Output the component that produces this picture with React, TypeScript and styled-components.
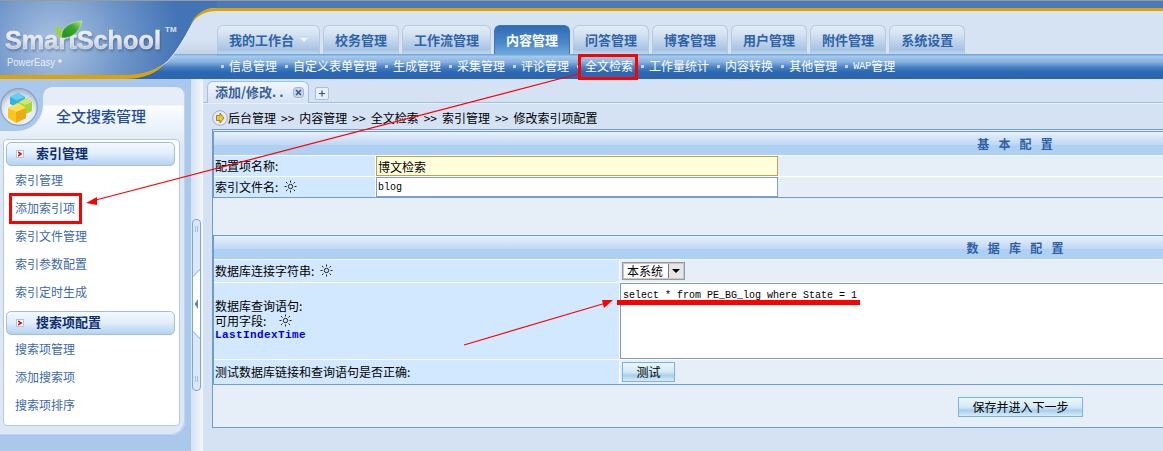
import React from "react";
import styled, { createGlobalStyle } from "styled-components";

const CJK = `"Noto Sans CJK SC", "Liberation Sans", sans-serif`;
const MONO = `"Liberation Mono", "Noto Sans CJK SC", monospace`;

const Global = createGlobalStyle`
  html, body { margin: 0; padding: 0; background: #d4e2f4; overflow: hidden; }
  body { font: 12px/1.2 ${CJK}; color: #000; }
  * { box-sizing: border-box; }
`;

const Page = styled.div`
  position: relative;
  width: 1163px;
  height: 451px;
  overflow: hidden;
  display: flex;
  flex-direction: column;
`;

const Header = styled.header`
  display: flex;
  height: 79px;
  flex: none;
`;

const LogoArt = styled.svg`
  display: block;
  flex: none;
  width: 217px;
  height: 79px;
`;

const NavArea = styled.nav`
  flex: 1;
  display: flex;
  flex-direction: column;
  background: linear-gradient(#9a9a9a 0 1px, #4a7bb8 1px 8px, #dfa200 8px 11px, #d5e3f3 11px);
`;

const TabRow = styled.div`
  height: 54px;
  padding-top: 25px;
  display: flex;
  gap: 3px;
`;

const NavTab = styled.div<{ $active?: boolean }>`
  height: 29px;
  padding: 0 11px;
  display: flex;
  align-items: center;
  border: 1px solid ${(p) => (p.$active ? "#3f74b4" : "#b9c9dc")};
  border-bottom: 0;
  border-radius: 6px 6px 0 0;
  background: ${(p) =>
    p.$active
      ? "linear-gradient(#2f6bb5, #4a88c8 60%, #6ea8dd)"
      : "linear-gradient(#e2ecf7, #d4e2f2 30%, #a7c3e3 85%, #c3d8ee)"};
  color: ${(p) => (p.$active ? "#fff" : "#2d63a8")};
  font-size: 13px;
  font-weight: 700;
  white-space: nowrap;
`;

const Caret = styled.span`
  width: 0;
  height: 0;
  margin-left: 6px;
  border: 4px solid transparent;
  border-top-color: #f2f6fb;
  border-bottom: 0;
`;

const SubNav = styled.div`
  height: 25px;
  padding-left: 4px;
  display: flex;
  align-items: center;
  gap: 8px;
  background: linear-gradient(#6fa8dc 0 1px, #a9cbec 2px, #86b1df 8px, #4b83c5 13px, #2b68b3 18px, #2c66ae);
  color: #fff;
  white-space: nowrap;
`;

const SubItem = styled.span`
  display: flex;
  align-items: center;
  &::before {
    content: "";
    width: 3px;
    height: 3px;
    margin-right: 5px;
    background: #d7e6f6;
    opacity: 0.85;
  }
`;

const Latin = styled.span`
  font: 10px ${MONO};
`;

const Body = styled.div`
  flex: 1;
  min-height: 0;
  display: flex;
`;

const Sidebar = styled.aside`
  flex: none;
  width: 191px;
  padding: 8px 6px 0 0;
  background: #a9c8ec;
`;

const SidePanel = styled.div`
  position: relative;
  height: 348px;
  border-radius: 0 9px 14px 0;
  background: linear-gradient(#e4edf8 0 18px, #fbfdff 19px, #dce8f5 60px);
  box-shadow: inset -1px -1px 0 #c3d3e6;
`;

const PanelNotch = styled.div`
  position: absolute;
  left: 0;
  top: 0;
  width: 43px;
  height: 44px;
  border-bottom-right-radius: 26px;
  background: #a9c8ec;
  &::after {
    content: "";
    position: absolute;
    left: 43px;
    top: 0;
    width: 9px;
    height: 9px;
    background: radial-gradient(circle at 100% 100%, transparent 8.5px, #a9c8ec 9px);
  }
`;

const Orb = styled.svg`
  position: absolute;
  left: 0;
  top: 1px;
  width: 38px;
  height: 38px;
`;

const PanelTitle = styled.h2`
  margin: 0;
  height: 52px;
  padding: 18px 0 0 56px;
  font-size: 15px;
  line-height: 22px;
  font-weight: 500;
  color: #1f4e96;
`;

const MenuBox = styled.div`
  height: 287px;
  margin: 0 5px 0 3px;
  padding: 2px;
  border: 1px solid #b7c8dc;
  border-radius: 4px;
  background: #fff;
`;

const MenuGroup = styled.div<{ $second?: boolean }>`
  height: 24px;
  margin-top: ${(p) => (p.$second ? "5px" : "0")};
  margin-right: 2px;
  padding: 0 0 3px 9px;
  display: flex;
  align-items: center;
  gap: 12px;
  border: 1px solid #a9bdd6;
  border-radius: 5px;
  background: linear-gradient(#f3f8fe, #e3effb 45%, #b4d2f3);
  color: #0e2f6e;
  font-size: 13px;
  font-weight: 700;
`;

const GroupGlyph = styled.svg`
  flex: none;
  width: 8px;
  height: 8px;
  margin-top: 3px;
`;

const MenuItem = styled.div`
  height: 28px;
  padding-left: 9px;
  line-height: 28px;
  color: #3c6aa8;
`;

const Splitter = styled.div`
  flex: none;
  width: 12px;
  padding: 140px 0 0 1px;
  background: linear-gradient(90deg, #d5e2f1, #f4f7fb);
`;

const SplitGrip = styled.svg`
  display: block;
  width: 9px;
  height: 172px;
`;

const Main = styled.main`
  flex: 1;
  min-width: 0;
  overflow: hidden;
  background: #d4e2f4;
`;

const TabStrip = styled.div`
  height: 24px;
  padding: 2px 0 0 4px;
  display: flex;
  gap: 6px;
  border-bottom: 1px solid #9fbfe3;
`;

const PageTab = styled.div`
  width: 102px;
  height: 22px;
  padding: 0 4px 1px 7px;
  display: flex;
  align-items: center;
  justify-content: space-between;
  border: 1px solid #9fbfe3;
  border-bottom: 0;
  border-radius: 6px 6px 0 0;
  background: linear-gradient(#f1f6fc, #d4e2f4);
  color: #3a5f95;
  font-size: 13px;
  font-weight: 700;
  white-space: nowrap;
`;

const TabIcon = styled.svg`
  display: block;
  flex: none;
`;

const AddButton = styled.svg`
  display: block;
  flex: none;
  margin-top: 6px;
  width: 14px;
  height: 13px;
`;

const Breadcrumb = styled.div`
  height: 26px;
  padding: 3px 0 0 9px;
  display: flex;
  align-items: center;
  gap: 5px;
  border-top: 1px solid #e9f0f9;
  white-space: nowrap;
`;

const CrumbIcon = styled.svg`
  width: 16px;
  height: 16px;
  margin-right: -5px;
  flex: none;
`;

const Frame = styled.section`
  width: 1606px;
  height: 299px;
  margin-left: 9px;
  padding-top: 1px;
  border: 1px solid #6f9ccb;
  background: #e6eef8;
`;

const FormTable = styled.div<{ $gap?: number }>`
  margin-top: ${(p) => p.$gap ?? 0}px;
  border: 1px solid #6f9ccb;
  background: #fff;
  display: flex;
  flex-direction: column;
  gap: 1px;
`;

const TableTitle = styled.div<{ $h: number }>`
  height: ${(p) => p.$h}px;
  padding-top: 2px;
  display: flex;
  align-items: center;
  justify-content: center;
  background: linear-gradient(#e7f0fb, #bed8f4 56%, #aed0f3 57%);
  color: #2d5fa6;
  font-size: 12px;
  font-weight: 700;
  word-spacing: 6.5px;
`;

const Row = styled.div<{ $label: number; $h: number }>`
  display: grid;
  grid-template-columns: ${(p) => p.$label}px 1fr;
  column-gap: 1px;
  height: ${(p) => p.$h}px;
`;

const Label = styled.div`
  padding: 0 0 2px 1px;
  display: flex;
  flex-direction: column;
  justify-content: center;
  background: #d2e8fe;
  line-height: 15px;
`;

const LabelLine = styled.div<{ $sun?: number }>`
  display: flex;
  align-items: center;
  gap: ${(p) => p.$sun ?? 6}px;
  white-space: nowrap;
`;

const FieldName = styled.div`
  font: 700 11px/15px ${MONO};
  letter-spacing: 0.4px;
  color: #0000e6;
`;

const Value = styled.div`
  min-width: 0;
  display: flex;
  align-items: center;
  background: #e6eef8;
`;

const TextField = styled.input<{ $focus?: boolean }>`
  width: 402px;
  height: 20px;
  padding: 0 1px;
  border: 1px solid ${(p) => (p.$focus ? "#c4a04e" : "#7f9fc4")};
  outline: none;
  border-radius: 0;
  background: ${(p) => (p.$focus ? "#ffffd9" : "#fff")};
  color: #000;
  font: ${(p) => (p.$focus ? `12px ${CJK}` : `10px ${MONO}`)};
`;

const Combo = styled.div`
  width: 63px;
  height: 18px;
  margin-left: 2px;
  padding-left: 4px;
  display: flex;
  align-items: center;
  justify-content: space-between;
  border: 1px solid #999;
  outline: 1px solid #c8c8c8;
  outline-offset: -2px;
  background: #fff;
`;

const ComboArrow = styled.span`
  width: 16px;
  height: 16px;
  display: flex;
  align-items: center;
  justify-content: center;
  border: 1px solid #777;
  background: #e6e6e6;
  &::before {
    content: "";
    border: 4px solid transparent;
    border-top-color: #000;
    border-bottom: 0;
  }
`;

const QueryBox = styled.textarea`
  width: 100%;
  height: 100%;
  padding: 5px 2px;
  border: 1px solid #7c9cc2;
  border-radius: 0;
  outline: none;
  resize: none;
  overflow: hidden;
  background: #fff;
  color: #000;
  font: 10px/14px ${MONO};
`;

const ActionButton = styled.button<{ $w: number }>`
  width: ${(p) => p.$w}px;
  height: 20px;
  padding: 0;
  border: 1px solid #7db3e0;
  border-radius: 0;
  background: linear-gradient(#e9f8fc, #d2e9f5 50%, #a9cfec 70%, #d6ecf8);
  color: #000;
  font: 12px/18px ${CJK};
`;

const InlineButton = styled(ActionButton)`
  margin-left: 2px;
`;

const SaveRow = styled.div`
  padding: 12px 0 0 745px;
`;

const Annotations = styled.svg`
  position: absolute;
  left: 0;
  top: 0;
  width: 1163px;
  height: 451px;
  pointer-events: none;
`;

const Sun = () => (
  <svg width="13" height="13" viewBox="0 0 13 13" fill="none" stroke="#222" strokeWidth="1">
    <circle cx="6.5" cy="6.5" r="2.2" />
    <path d="M6.5 0.5v2M6.5 10.5v2M0.5 6.5h2M10.5 6.5h2M2 2l1.5 1.5M11 2L9.5 3.5M2 11l1.5-1.5M11 11L9.5 9.5" />
  </svg>
);

const GroupIcon = () => (
  <GroupGlyph viewBox="0 0 8 8">
    <rect x="0.5" y="0.5" width="7" height="7" fill="#fff" stroke="#b9c4d2" />
    <path d="M2 1.2L6.6 4L2 6.8V4.9L3.8 4L2 3.1Z" fill="#e00010" />
  </GroupGlyph>
);

const navTabs = ["校务管理", "工作流管理", "内容管理", "问答管理", "博客管理", "用户管理", "附件管理", "系统设置"];
const subItems = ["信息管理", "自定义表单管理", "生成管理", "采集管理", "评论管理", "全文检索", "工作量统计", "内容转换", "其他管理"];
const groupOne = ["索引管理", "添加索引项", "索引文件管理", "索引参数配置", "索引定时生成"];
const groupTwo = ["搜索项管理", "添加搜索项", "搜索项排序"];
const crumbs = ["后台管理", ">>", "内容管理", ">>", "全文检索", ">>", "索引管理", ">>", "修改索引项配置"];

const Logo = () => (
  <LogoArt viewBox="0 0 217 79">
    <defs>
      <radialGradient id="lg" gradientUnits="userSpaceOnUse" cx="55" cy="45" r="125">
        <stop offset="0" stopColor="#adc4e3" />
        <stop offset="0.55" stopColor="#6d95c9" />
        <stop offset="1" stopColor="#4374b5" />
      </radialGradient>
      <linearGradient id="sn" x1="0" y1="0" x2="0" y2="1">
        <stop offset="0" stopColor="#6fa8dc" />
        <stop offset="0.08" stopColor="#a9cbec" />
        <stop offset="0.32" stopColor="#86b1df" />
        <stop offset="0.52" stopColor="#4b83c5" />
        <stop offset="0.72" stopColor="#2b68b3" />
        <stop offset="1" stopColor="#2c66ae" />
      </linearGradient>
      <linearGradient id="st" x1="0" y1="0" x2="0" y2="1">
        <stop offset="0" stopColor="#f6f6f6" />
        <stop offset="0.55" stopColor="#dfe3e8" />
        <stop offset="1" stopColor="#a9afb8" />
      </linearGradient>
      <linearGradient id="lf" x1="0" y1="1" x2="1" y2="0">
        <stop offset="0" stopColor="#1f8f2a" />
        <stop offset="0.6" stopColor="#3aa92f" />
        <stop offset="1" stopColor="#bfe67f" />
      </linearGradient>
      <linearGradient id="sh" x1="0" y1="0" x2="0" y2="1">
        <stop offset="0" stopColor="#d5e3f3" />
        <stop offset="1" stopColor="#b7c7da" />
      </linearGradient>
    </defs>
    <rect width="217" height="79" fill="#d5e3f3" />
    <rect y="40" width="217" height="14" fill="url(#sh)" opacity="0.55" />
    <rect y="54" width="217" height="25" fill="url(#sn)" />
    <path d="M0 1H217V8C205 8 198 12 190 27C184 38 178 50 168 61C158 70 145 76 125 76H0Z" fill="url(#lg)" />
    <rect width="217" height="1" fill="#9a9a9a" />
    <path d="M192 25C185 37 178 50 168 61C160 68 150 73 138 75" fill="none" stroke="#e4edf7" strokeWidth="1" />
    <path d="M217 8C205 8 197 12 190 25C197 15 206 11 217 11Z" fill="#dfa200" />
    <path d="M0 75H125C143 75 156 70 165 63C158 73 143 79 125 79H0Z" fill="#dfa200" />
    <text
      x="5"
      y="49"
      textLength="156"
      lengthAdjust="spacingAndGlyphs"
      fontFamily="'Liberation Sans', sans-serif"
      fontWeight="700"
      fontSize="26"
      fill="url(#st)"
      stroke="#eef1f5"
      strokeWidth="0.4"
      style={{ filter: "drop-shadow(1px 2px 1px rgba(40,70,120,.45))" }}
    >
      SmartSchool
    </text>
    <path d="M56 27C59 24 63 29 63 38C58 38 54 32 56 27Z" fill="#9bd344" />
    <path d="M62 38C60 28 70 22 82 21C80 31 72 39 62 38Z" fill="url(#lf)" stroke="#d8f0a8" strokeWidth="0.5" />
    <text x="165" y="32" fontFamily="'Liberation Sans', sans-serif" fontWeight="700" fontSize="8" fill="#d7e2ef">TM</text>
    <text
      x="7"
      y="66"
      textLength="48"
      lengthAdjust="spacingAndGlyphs"
      fontFamily="'Liberation Sans', sans-serif"
      fontSize="10"
      fill="#e6eef8"
    >
      PowerEasy
    </text>
    <circle cx="60" cy="61" r="1.8" fill="#e6eef8" />
  </LogoArt>
);

export default function App() {
  return (
    <Page>
      <Global />
      <Header>
        <Logo />
        <NavArea>
          <TabRow>
            <NavTab>
              我的工作台
              <Caret />
            </NavTab>
            {navTabs.map((t) => (
              <NavTab key={t} $active={t === "内容管理"}>
                {t}
              </NavTab>
            ))}
          </TabRow>
          <SubNav>
            {subItems.map((s) => (
              <SubItem key={s}>{s}</SubItem>
            ))}
            <SubItem>
              <Latin>WAP</Latin>管理
            </SubItem>
          </SubNav>
        </NavArea>
      </Header>

      <Body>
        <Sidebar>
          <SidePanel>
            <PanelNotch />
            <Orb viewBox="0 0 38 38">
              <defs>
                <radialGradient id="orb" cx="0.5" cy="0.65" r="0.6">
                  <stop offset="0" stopColor="#ffffff" />
                  <stop offset="0.7" stopColor="#e3ebf5" />
                  <stop offset="1" stopColor="#a9bdd6" />
                </radialGradient>
              </defs>
              <circle cx="19" cy="19" r="18.3" fill="url(#orb)" stroke="#8a9fba" strokeWidth="1.2" />
              <path d="M10 9L18 5L25 9V16L17 20L10 16Z" fill="#31b3ea" />
              <path d="M10 9L17 12.5L25 9L18 5Z" fill="#63cdf5" />
              <path d="M19 14L27 10L32 14V23L24 27L19 23Z" fill="#a6d63a" />
              <path d="M19 14L25 17L32 14L27 10Z" fill="#cbe96f" />
              <path d="M8 20L18 15L26 20V30L16 35L8 30Z" fill="#fbc51e" />
              <path d="M8 20L16 24L26 20L18 15Z" fill="#ffe05c" />
              <path d="M16 24V35L26 30V20Z" fill="#f0ab12" />
            </Orb>
            <PanelTitle>全文搜索管理</PanelTitle>
            <MenuBox>
              <MenuGroup>
                <GroupIcon />
                索引管理
              </MenuGroup>
              {groupOne.map((m) => (
                <MenuItem key={m}>{m}</MenuItem>
              ))}
              <MenuGroup $second>
                <GroupIcon />
                搜索项配置
              </MenuGroup>
              {groupTwo.map((m) => (
                <MenuItem key={m}>{m}</MenuItem>
              ))}
            </MenuBox>
          </SidePanel>
        </Sidebar>

        <Splitter>
          <SplitGrip viewBox="0 0 9 172">
            <rect x="0.5" y="0.5" width="8" height="171" rx="3.5" fill="#dbe8f7" stroke="#7fa5d0" />
            <path d="M0.5 58L8.5 50V120L0.5 112Z" fill="#fff" stroke="#7fa5d0" />
            <path d="M6 80V90L2.5 85Z" fill="#5f88bb" />
            <path d="M3 8h1M5 8h1M3 10h1M5 10h1M3 12h1M5 12h1M3 158h1M5 158h1M3 160h1M5 160h1M3 162h1M5 162h1" stroke="#7592b5" />
          </SplitGrip>
        </Splitter>

        <Main>
          <TabStrip>
            <PageTab>
              <span>添加/修改. .</span>
              <TabIcon width="11" height="11" viewBox="0 0 11 11">
                <rect x="0.5" y="0.5" width="10" height="10" rx="3" fill="#c6d6ea" stroke="#9db6d4" />
                <path d="M3 3L8 8M8 3L3 8" stroke="#3c5478" strokeWidth="1.5" />
              </TabIcon>
            </PageTab>
            <AddButton viewBox="0 0 14 13">
              <rect x="0.5" y="0.5" width="13" height="12" rx="1.5" fill="#e8eff8" stroke="#a9c0dc" />
              <path d="M4 6.5h6M7 3.5v6" stroke="#3c5478" strokeWidth="1.2" />
            </AddButton>
          </TabStrip>
          <Breadcrumb>
            <CrumbIcon viewBox="0 0 16 16">
              <circle cx="8" cy="8" r="7.3" fill="#e4ecf6" stroke="#9aaec8" />
              <path d="M4.5 5.5H8V3L12 8L8 13V10.5H4.5Z" fill="#f3c531" stroke="#8d6d10" strokeWidth="0.8" />
            </CrumbIcon>
            {crumbs.map((c, i) => (
              <span key={i}>{c}</span>
            ))}
          </Breadcrumb>
          <Frame>
            <FormTable>
              <TableTitle $h={23}>基 本 配 置</TableTitle>
              <Row $label={161} $h={20}>
                <Label>
                  <LabelLine>配置项名称:</LabelLine>
                </Label>
                <Value>
                  <TextField $focus readOnly value="博文检索" />
                </Value>
              </Row>
              <Row $label={161} $h={20}>
                <Label>
                  <LabelLine>
                    索引文件名: <Sun />
                  </LabelLine>
                </Label>
                <Value>
                  <TextField readOnly value="blog" />
                </Value>
              </Row>
            </FormTable>
            <FormTable $gap={37}>
              <TableTitle $h={23}>数 据 库 配 置</TableTitle>
              <Row $label={405} $h={22}>
                <Label>
                  <LabelLine>
                    数据库连接字符串: <Sun />
                  </LabelLine>
                </Label>
                <Value>
                  <Combo>
                    本系统
                    <ComboArrow />
                  </Combo>
                </Value>
              </Row>
              <Row $label={405} $h={76}>
                <Label>
                  <LabelLine>数据库查询语句:</LabelLine>
                  <LabelLine $sun={13}>
                    可用字段: <Sun />
                  </LabelLine>
                  <FieldName>LastIndexTime</FieldName>
                </Label>
                <Value>
                  <QueryBox readOnly value="select * from PE_BG_log where State = 1" />
                </Value>
              </Row>
              <Row $label={405} $h={24}>
                <Label>
                  <LabelLine>测试数据库链接和查询语句是否正确:</LabelLine>
                </Label>
                <Value>
                  <InlineButton $w={53}>测试</InlineButton>
                </Value>
              </Row>
            </FormTable>
            <SaveRow>
              <ActionButton $w={125}>保存并进入下一步</ActionButton>
            </SaveRow>
          </Frame>
        </Main>
      </Body>

      <Annotations viewBox="0 0 1163 451">
        <g fill="none" stroke="#f00">
          <rect x="579.5" y="55.5" width="57" height="23" strokeWidth="3" />
          <rect x="10.5" y="194.5" width="70" height="28" strokeWidth="3" />
          <path d="M578 74L92 201" strokeWidth="1.2" />
          <path d="M464 345L606 303" strokeWidth="1.2" />
        </g>
        <path d="M86 203L97 197L97 205Z" fill="#f00" />
        <path d="M613 300L602 300L604 308Z" fill="#f00" />
        <rect x="617" y="300" width="243" height="5" fill="#f00" />
      </Annotations>
    </Page>
  );
}
